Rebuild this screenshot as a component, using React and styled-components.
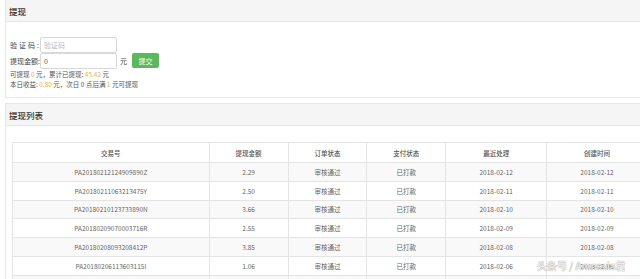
import styled, { createGlobalStyle } from "styled-components";

const GlobalStyle = createGlobalStyle`
  html, body {
    margin: 0;
    padding: 0;
    background: #fff;
    overflow: hidden;
  }
  body {
    font-family: "Noto Sans CJK SC", "Open Sans", sans-serif;
    color: #555;
  }
`;

const rows = [
  ["PA20180212124909890Z", "2.29", "2018-02-12"],
  ["PA20180211063213475Y", "2.50", "2018-02-11"],
  ["PA20180210123733890N", "3.66", "2018-02-10"],
  ["PA20180209070003716R", "2.55", "2018-02-09"],
  ["PA20180208093208412P", "3.85", "2018-02-08"],
  ["PA20180206113603115I", "1.06", "2018-02-06"],
  ["PA20180205101203771K", "2.13", "2018-02-05"],
];

const Page = styled.div`
  width: 680px;
  height: 279px;
  padding-left: 5px;
  box-sizing: border-box;
  display: flex;
  flex-direction: column;
  gap: 5px;
  position: relative;
  overflow: hidden;
`;

const Panel = styled.section`
  border: 1px solid #e7e7e7;
  border-top: ${(p) => (p.$noTop ? "none" : "1px solid #e7e7e7")};
  background: #fff;
  flex-shrink: 0;
`;

const PanelHead = styled.div`
  height: 21px;
  background: #f5f5f5;
  border-bottom: 1px solid #e5e5e5;
  display: flex;
  align-items: center;
  padding-left: 3px;
  font-size: 8.5px;
  color: #333;
  font-weight: 500;
`;

const FormBody = styled.div`
  padding: 15px 4px 8px 4px;
  display: flex;
  flex-direction: column;
`;

const FormRow = styled.div`
  display: flex;
  align-items: center;
  height: 15px;
  margin-bottom: 1px;
`;

const Label = styled.span`
  width: 30px;
  font-size: 7px;
  color: #444;
  letter-spacing: ${(p) => (p.$spread ? "2px" : "0")};
  white-space: nowrap;
`;

const Input = styled.div`
  width: 72px;
  height: 14px;
  border: 1px solid #d8d8d8;
  border-radius: 2px;
  font-size: 7px;
  color: ${(p) => (p.$placeholder ? "#bbb" : "#555")};
  display: flex;
  align-items: center;
  padding-left: 3px;
`;

const Unit = styled.span`
  font-size: 7px;
  color: #444;
  margin-left: 3px;
`;

const Submit = styled.button`
  margin-left: 5px;
  width: 27px;
  height: 15px;
  border: none;
  border-radius: 2px;
  background: #5cb85c;
  color: #fff;
  font-size: 7px;
  font-family: inherit;
  padding: 0;
`;

const Note = styled.div`
  font-size: 6.5px;
  color: #555;
  line-height: 10px;
  white-space: nowrap;
`;

const Hi = styled.span`
  color: #f0ad4e;
`;

const TableWrap = styled.div`
  padding: 16px 6px 0 6px;
`;

const Table = styled.table`
  border-collapse: collapse;
  width: 636px;
  font-size: 6.5px;
  color: #666;
  th, td {
    border: 1px solid #e4e4e4;
    text-align: center;
    padding: 0;
    white-space: nowrap;
  }
  th {
    height: 19px;
    font-weight: 500;
    color: #555;
  }
  td {
    height: 17.8px;
  }
  tbody tr:nth-child(odd) {
    background: #f9f9f9;
  }
`;

const Watermark = styled.div`
  position: absolute;
  left: 537px;
  top: 258px;
  font-size: 10px;
  color: rgba(255, 255, 255, 0.9);
  text-shadow: 0 0 1px #999, 0 0 1px #999;
  white-space: nowrap;
`;

export default function App() {
  return (
    <>
      <GlobalStyle />
      <Page>
        <Panel $noTop>
          <PanelHead>提现</PanelHead>
          <FormBody>
            <FormRow>
              <Label $spread>验证码:</Label>
              <Input $placeholder>验证码</Input>
            </FormRow>
            <FormRow>
              <Label>提现金额:</Label>
              <Input>0</Input>
              <Unit>元</Unit>
              <Submit>提交</Submit>
            </FormRow>
            <Note>
              可提现 <Hi>0</Hi> 元，累计已提现: <Hi>45.42</Hi> 元
            </Note>
            <Note>
              本日收益: <Hi>0.80</Hi> 元，次日 0 点后满 <Hi>1</Hi> 元可提现
            </Note>
          </FormBody>
        </Panel>
        <Panel>
          <PanelHead>提现列表</PanelHead>
          <TableWrap>
            <Table>
              <colgroup>
                <col style={{ width: 197 }} />
                <col style={{ width: 79 }} />
                <col style={{ width: 79 }} />
                <col style={{ width: 79 }} />
                <col style={{ width: 101 }} />
                <col style={{ width: 101 }} />
              </colgroup>
              <thead>
                <tr>
                  <th>交易号</th>
                  <th>提现金额</th>
                  <th>订单状态</th>
                  <th>支付状态</th>
                  <th>最近处理</th>
                  <th>创建时间</th>
                </tr>
              </thead>
              <tbody>
                {rows.map((r) => (
                  <tr key={r[0]}>
                    <td>{r[0]}</td>
                    <td>{r[1]}</td>
                    <td>审核通过</td>
                    <td>已打款</td>
                    <td>{r[2]}</td>
                    <td>{r[2]}</td>
                  </tr>
                ))}
              </tbody>
            </Table>
          </TableWrap>
        </Panel>
        <Watermark>头条号 / Amnesia君</Watermark>
      </Page>
    </>
  );
}
